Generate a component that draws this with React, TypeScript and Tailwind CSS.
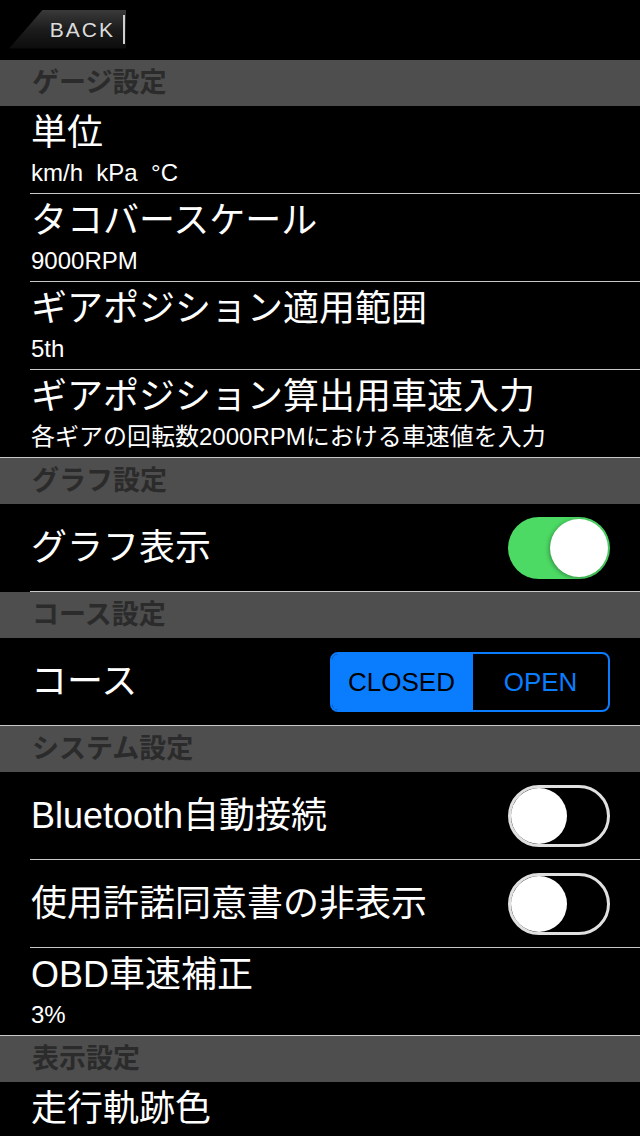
import { ReactNode } from "react"

const font = { fontFamily: '"Liberation Sans", "Noto Sans CJK JP", sans-serif' }

function Header({ label }: { label: string }) {
    return <div className="h-[46px] bg-[#4e4e4e] flex items-center pl-[32px]">
        <span className="text-[27px] font-bold text-[#2b2b2b] leading-none">{label}</span>
    </div>
}

function Row({ title, sub, right, last }: { title: string, sub?: string, right?: ReactNode, last?: boolean }) {
    return <div className={`relative h-[88px] flex ${sub ? "items-start" : "items-center"}`}>
        <div className={`flex-1 pl-[31px] ${sub ? "pt-[9px]" : ""}`}>
            <div className="text-white text-[36px] leading-none whitespace-nowrap">{title}</div>
            {sub ? <div className="text-white text-[24px] leading-none mt-[10px] whitespace-pre">{sub}</div> : null}
        </div>
        {right ? <div className="pr-[30px]">{right}</div> : null}
        <div className={`absolute bottom-0 right-0 h-px bg-[#c8c8c8] ${last ? "left-0" : "left-[30px]"}`} />
    </div>
}

function Toggle({ on }: { on: boolean }) {
    if (on) {
        return <div className="w-[102px] h-[62px] rounded-full bg-[#4cd964] relative">
            <div className="absolute top-[2px] right-[2px] w-[58px] h-[58px] rounded-full bg-white shadow-[-1px_1px_4px_rgba(0,0,0,0.35)]" />
        </div>
    }
    return <div className="w-[102px] h-[62px] rounded-full border-[3px] border-[#e0e0e0] relative">
        <div className="absolute top-[0px] left-[0px] w-[56px] h-[56px] rounded-full bg-white" />
    </div>
}

function Segment() {
    return <div className="w-[280px] h-[60px] rounded-[8px] border-2 border-[#0a7dff] flex overflow-hidden">
        <div className="w-[139px] bg-[#0a7dff] flex items-center justify-center text-black text-[26px]">CLOSED</div>
        <div className="flex-1 border-l-2 border-[#0a7dff] flex items-center justify-center text-[#0a7dff] text-[26px]">OPEN</div>
    </div>
}

export default function App() {
    return <div className="w-[640px] h-[1136px] bg-black overflow-hidden" style={font}>
        <div className="h-[60px] flex items-center pl-[9px]">
            <div className="relative w-[117px] h-[39px] mt-[-2px] bg-gradient-to-b from-[#3a3a3a] via-[#1c1c1c] to-[#0c0c0c] [clip-path:polygon(29%_0,100%_0,100%_100%,0_100%)] flex items-center justify-end pr-[11px]">
                <span className="text-[#dcdcdc] text-[21px] tracking-[2px] leading-none">BACK</span>
                <div className="absolute right-[1px] top-[5px] bottom-[5px] w-[2px] bg-[#cfcfcf]" />
            </div>
        </div>
        <Header label="ゲージ設定" />
        <Row title="単位" sub="km/h  kPa  °C" />
        <Row title="タコバースケール" sub="9000RPM" />
        <Row title="ギアポジション適用範囲" sub="5th" />
        <Row title="ギアポジション算出用車速入力" sub="各ギアの回転数2000RPMにおける車速値を入力" last />
        <Header label="グラフ設定" />
        <Row title="グラフ表示" right={<Toggle on={true} />} />
        <Header label="コース設定" />
        <Row title="コース" right={<Segment />} last />
        <Header label="システム設定" />
        <Row title="Bluetooth自動接続" right={<Toggle on={false} />} />
        <Row title="使用許諾同意書の非表示" right={<Toggle on={false} />} />
        <Row title="OBD車速補正" sub="3%" last />
        <Header label="表示設定" />
        <Row title="走行軌跡色" sub=" " />
    </div>
}
